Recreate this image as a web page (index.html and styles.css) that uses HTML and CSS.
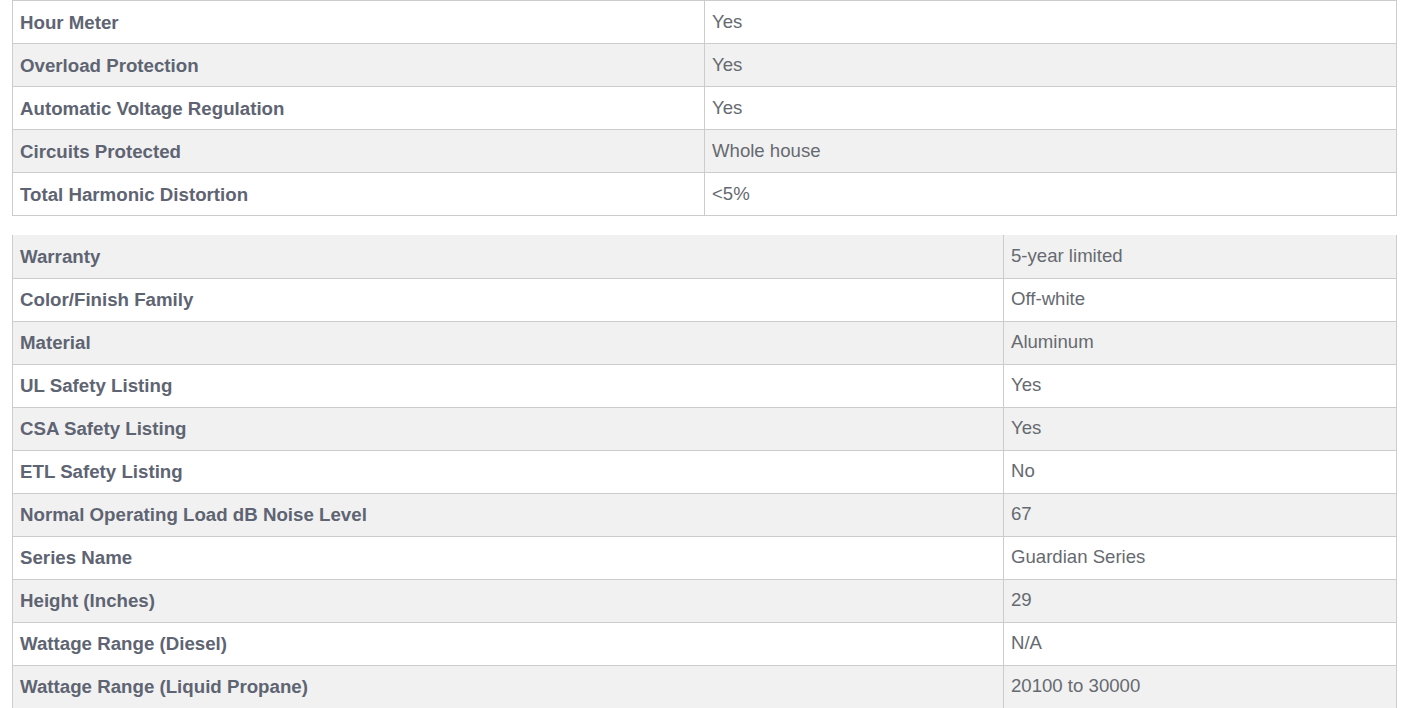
FILE: index.html
```html
<!DOCTYPE html>
<html>
<head>
<meta charset="utf-8">
<link rel="stylesheet" href="styles.css">
</head>
<body>
<div class="wrap">
  <table class="specs specs-a">
    <tr><th>Hour Meter</th><td>Yes</td></tr>
    <tr class="alt"><th>Overload Protection</th><td>Yes</td></tr>
    <tr><th>Automatic Voltage Regulation</th><td>Yes</td></tr>
    <tr class="alt"><th>Circuits Protected</th><td>Whole house</td></tr>
    <tr><th>Total Harmonic Distortion</th><td>&lt;5%</td></tr>
  </table>
  <table class="specs specs-b">
    <tr class="alt first"><th>Warranty</th><td>5-year limited</td></tr>
    <tr><th>Color/Finish Family</th><td>Off-white</td></tr>
    <tr class="alt"><th>Material</th><td>Aluminum</td></tr>
    <tr><th>UL Safety Listing</th><td>Yes</td></tr>
    <tr class="alt"><th>CSA Safety Listing</th><td>Yes</td></tr>
    <tr><th>ETL Safety Listing</th><td>No</td></tr>
    <tr class="alt"><th>Normal Operating Load dB Noise Level</th><td>67</td></tr>
    <tr><th>Series Name</th><td>Guardian Series</td></tr>
    <tr class="alt"><th>Height (Inches)</th><td>29</td></tr>
    <tr><th>Wattage Range (Diesel)</th><td>N/A</td></tr>
    <tr class="alt"><th>Wattage Range (Liquid Propane)</th><td>20100 to 30000</td></tr>
  </table>
</div>
</body>
</html>
```
FILE: styles.css
```css
html, body {
  margin: 0;
  padding: 0;
  background: #ffffff;
}
.wrap {
  padding: 0 14px 0 12px;
  font-family: "Liberation Sans", Arial, sans-serif;
}
.specs {
  width: 100%;
  border-collapse: collapse;
  table-layout: fixed;
}
.specs th, .specs td {
  border: 1px solid #cccccc;
  height: 43px;
  padding: 0 7px;
  text-align: left;
  vertical-align: middle;
  box-sizing: border-box;
}
.specs th {
  font-size: 18.7px;
  font-weight: bold;
  color: #5e6472;
  padding-top: 1px;
}
.specs td {
  font-size: 18.6px;
  font-weight: normal;
  color: #666a70;
  padding-bottom: 1px;
}
.specs tr.alt th, .specs tr.alt td {
  background: #f1f1f1;
}
.specs-a th { width: 692px; }
.specs-b {
  margin-top: 19px;
}
.specs-b th { width: 991px; }
.specs-b tr.first th, .specs-b tr.first td {
  border-top: none;
}
```
